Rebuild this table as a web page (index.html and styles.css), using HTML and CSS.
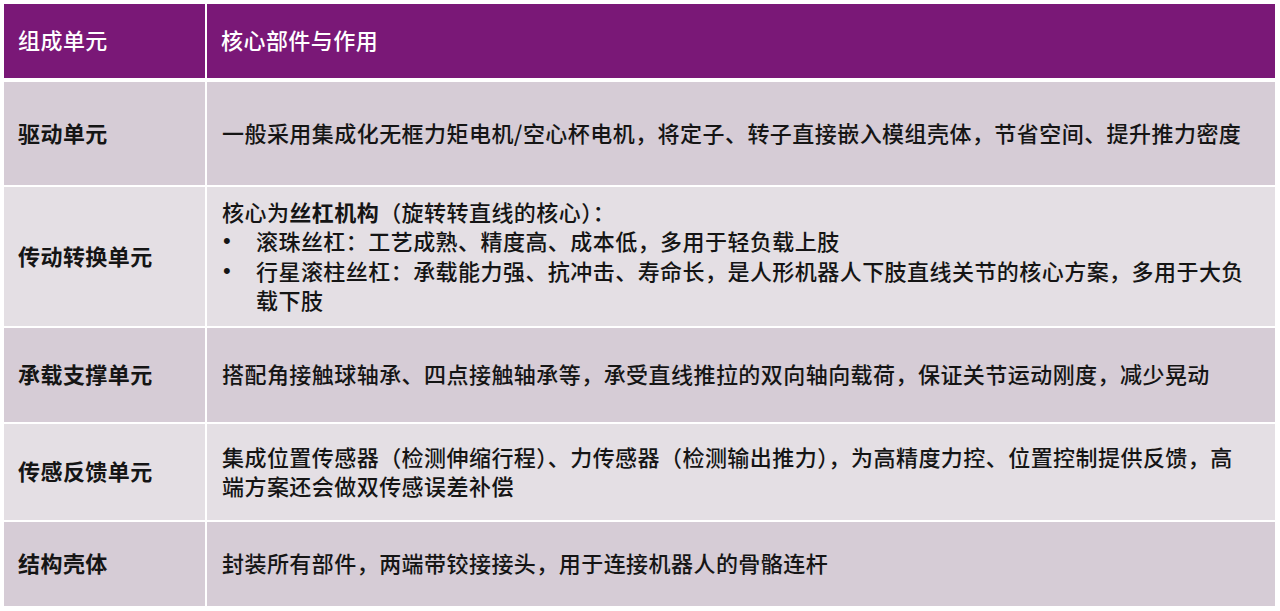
FILE: index.html
```html
<!DOCTYPE html>
<html lang="zh-CN">
<head>
<meta charset="utf-8">
<title>组成单元</title>
<link rel="stylesheet" href="styles.css">
</head>
<body>
<div class="table">
  <div class="cell head">组成单元</div>
  <div class="cell head body-col">核心部件与作用</div>

  <div class="cell label odd">驱动单元</div>
  <div class="cell desc odd">一般采用集成化无框力矩电机/空心杯电机，将定子、转子直接嵌入模组壳体，节省空间、提升推力密度</div>

  <div class="cell label even">传动转换单元</div>
  <div class="cell desc even">
    <div class="block">
      <p>核心为<b>丝杠机构</b>（旋转转直线的核心）：</p>
      <ul class="bullets">
        <li><span class="dot">•</span><span>滚珠丝杠：工艺成熟、精度高、成本低，多用于轻负载上肢</span></li>
        <li><span class="dot">•</span><span>行星滚柱丝杠：承载能力强、抗冲击、寿命长，是人形机器人下肢直线关节的核心方案，多用于大负<br>载下肢</span></li>
      </ul>
    </div>
  </div>

  <div class="cell label odd">承载支撑单元</div>
  <div class="cell desc odd">搭配角接触球轴承、四点接触轴承等，承受直线推拉的双向轴向载荷，保证关节运动刚度，减少晃动</div>

  <div class="cell label even">传感反馈单元</div>
  <div class="cell desc even"><p>集成位置传感器（检测伸缩行程）、力传感器（检测输出推力），为高精度力控、位置控制提供反馈，高<br>端方案还会做双传感误差补偿</p></div>

  <div class="cell label odd">结构壳体</div>
  <div class="cell desc odd">封装所有部件，两端带铰接接头，用于连接机器人的骨骼连杆</div>
</div>
</body>
</html>
```

FILE: styles.css
```css
* { box-sizing: border-box; }
html, body { margin: 0; padding: 0; background: #ffffff; }
body {
  padding: 4px 5px 0 4px;
  font-family: "Noto Sans CJK SC", "Noto Sans", sans-serif;
  font-size: 22px;
  font-weight: 500;
  letter-spacing: 0.45px;
  color: #151515;
}
.table {
  display: grid;
  grid-template-columns: 201px 1068px;
  grid-template-rows: 76px 103px 139px 94px 96px 84px;
  column-gap: 2px;
  row-gap: 2px;
}
.cell {
  display: flex;
  align-items: center;
  line-height: 29.5px;
  padding: 0 10px 0 15px;
}
.head {
  background: #7a1877;
  color: #ffffff;
  height: 74px;
  align-self: start;
  padding-left: 14px;
  padding-bottom: 3px;
}
.label {
  font-weight: 700;
  padding-left: 14px;
  padding-bottom: 2px;
}
.odd { background: #d6ccd6; }
.even { background: #e4dfe4; }
p { margin: 0; }
b { font-weight: 700; }
.desc { padding-bottom: 2px; }
.bullets {
  list-style: none;
  margin: 0;
  padding: 0;
}
.bullets li {
  display: grid;
  grid-template-columns: 34px 1fr;
}
.dot {
  font-family: "Liberation Sans", Arial, sans-serif;
  font-size: 22px;
  padding-left: 1px;
}
```
